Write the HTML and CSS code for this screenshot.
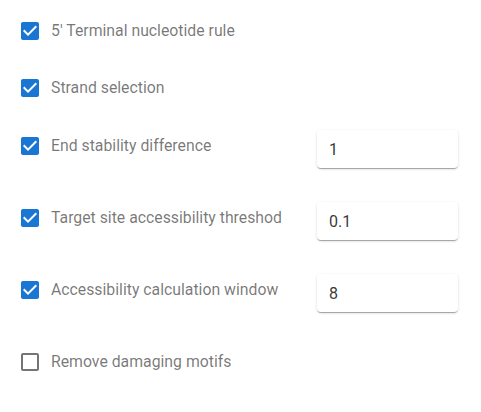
FILE: index.html
```html
<!DOCTYPE html>
<html>
<head>
<meta charset="utf-8">
<link rel="stylesheet" href="styles.css">
</head>
<body>
<div class="form">
  <div class="row r57">
    <label class="opt"><span class="cb"><svg viewBox="0 0 24 24" class="on"><path d="M19 3H5c-1.11 0-2 .9-2 2v14c0 1.1.89 2 2 2h14c1.11 0 2-.9 2-2V5c0-1.1-.89-2-2-2zm-9 14l-5-5 1.41-1.41L10 14.17l7.59-7.59L19 8l-9 9z"/></svg></span><span class="lbl">5' Terminal nucleotide rule</span></label>
  </div>
  <div class="row r58">
    <label class="opt"><span class="cb"><svg viewBox="0 0 24 24" class="on"><path d="M19 3H5c-1.11 0-2 .9-2 2v14c0 1.1.89 2 2 2h14c1.11 0 2-.9 2-2V5c0-1.1-.89-2-2-2zm-9 14l-5-5 1.41-1.41L10 14.17l7.59-7.59L19 8l-9 9z"/></svg></span><span class="lbl">Strand selection</span></label>
  </div>
  <div class="row r72">
    <label class="opt"><span class="cb"><svg viewBox="0 0 24 24" class="on"><path d="M19 3H5c-1.11 0-2 .9-2 2v14c0 1.1.89 2 2 2h14c1.11 0 2-.9 2-2V5c0-1.1-.89-2-2-2zm-9 14l-5-5 1.41-1.41L10 14.17l7.59-7.59L19 8l-9 9z"/></svg></span><span class="lbl">End stability difference</span></label>
    <div class="field">1</div>
  </div>
  <div class="row r72">
    <label class="opt"><span class="cb"><svg viewBox="0 0 24 24" class="on"><path d="M19 3H5c-1.11 0-2 .9-2 2v14c0 1.1.89 2 2 2h14c1.11 0 2-.9 2-2V5c0-1.1-.89-2-2-2zm-9 14l-5-5 1.41-1.41L10 14.17l7.59-7.59L19 8l-9 9z"/></svg></span><span class="lbl">Target site accessibility threshod</span></label>
    <div class="field">0.1</div>
  </div>
  <div class="row r72">
    <label class="opt"><span class="cb"><svg viewBox="0 0 24 24" class="on"><path d="M19 3H5c-1.11 0-2 .9-2 2v14c0 1.1.89 2 2 2h14c1.11 0 2-.9 2-2V5c0-1.1-.89-2-2-2zm-9 14l-5-5 1.41-1.41L10 14.17l7.59-7.59L19 8l-9 9z"/></svg></span><span class="lbl">Accessibility calculation window</span></label>
    <div class="field">8</div>
  </div>
  <div class="row">
    <label class="opt"><span class="cb"><svg viewBox="0 0 24 24" class="off"><path d="M19 5v14H5V5h14m0-2H5c-1.1 0-2 .9-2 2v14c0 1.1.9 2 2 2h14c1.1 0 2-.9 2-2V5c0-1.1-.9-2-2-2z"/></svg></span><span class="lbl">Remove damaging motifs</span></label>
  </div>
</div>
</body>
</html>
```
FILE: styles.css
```css
html, body {
  margin: 0;
  padding: 0;
  background: #fff;
}
body {
  font-family: Roboto, "Liberation Sans", sans-serif;
  width: 481px;
  height: 412px;
  overflow: hidden;
}
.form {
  padding: 10px 23px 0 9px;
  display: flex;
  flex-direction: column;
}
.row {
  display: flex;
  align-items: flex-start;
  justify-content: space-between;
}
.r57 { height: 57px; }
.r58 { height: 58px; }
.r72 { height: 72px; }
.opt {
  display: flex;
  align-items: center;
  height: 42px;
}
.cb {
  width: 24px;
  height: 24px;
  padding: 9px;
  display: flex;
}
.cb svg {
  width: 24px;
  height: 24px;
}
.cb .on { fill: #1976d2; }
.cb .off { fill: rgba(0, 0, 0, 0.54); }
.lbl {
  font-size: 15.8px;
  color: rgba(0, 0, 0, 0.54);
  line-height: 24px;
}
.field {
  margin-top: 5px;
  width: 141px;
  height: 38px;
  box-sizing: border-box;
  padding: 0 12px;
  display: flex;
  align-items: center;
  font-size: 16px;
  color: rgba(0, 0, 0, 0.8);
  background: #fff;
  border-radius: 4px;
  box-shadow: 0 2px 1px -1px rgba(0,0,0,0.2), 0 1px 1px 0 rgba(0,0,0,0.14), 0 1px 3px 0 rgba(0,0,0,0.12);
}
```
